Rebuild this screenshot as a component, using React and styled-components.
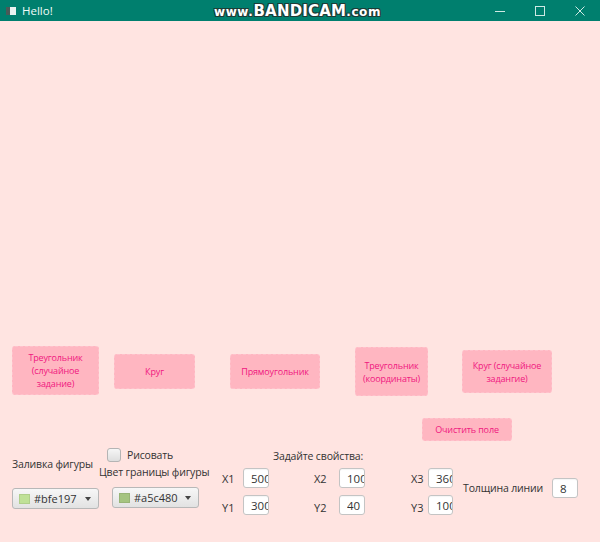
import React from "react";
import styled, { createGlobalStyle } from "styled-components";

const Global = createGlobalStyle`
  html, body { margin: 0; padding: 0; }
  body {
    width: 600px; height: 542px; overflow: hidden;
    background: #ffe4e1;
    font-family: "Open Sans", "Noto Sans", sans-serif;
    color: #333;
  }
  * { box-sizing: border-box; }
`;

const Window = styled.div`
  width: 600px;
  height: 542px;
  display: flex;
  flex-direction: column;
  background: #ffe4e1;
`;

const TitleBar = styled.div`
  height: 21px;
  flex: none;
  background: #007f6e;
  display: flex;
  align-items: center;
  position: relative;
  color: #fff;
`;

const AppIcon = styled.div`
  width: 10px;
  height: 8px;
  margin-left: 6px;
  background: #e8f2f0;
  border-left: 4px solid #4a5a58;
`;

const TitleText = styled.span`
  margin-left: 6px;
  font-size: 11.5px;
  color: #f2fbf9;
`;

const Watermark = styled.div`
  position: absolute;
  left: 214px;
  top: 1px;
  font-family: "DejaVu Sans", sans-serif;
  font-weight: bold;
  color: #fff;
  white-space: nowrap;
  text-shadow: -1px -1px 0 #1d3b36, 1px -1px 0 #1d3b36, -1px 1px 0 #1d3b36, 1px 1px 0 #1d3b36;
`;

const WmSmall = styled.span`
  font-size: 12px;
  letter-spacing: 0.6px;
`;
const WmBig = styled.span`
  font-size: 15px;
  letter-spacing: 0.2px;
`;

const WinButtons = styled.div`
  margin-left: auto;
  display: flex;
  align-items: center;
  height: 100%;
`;

const WinBtn = styled.div`
  width: 40px;
  height: 21px;
  display: flex;
  align-items: center;
  justify-content: center;
`;

const Canvas = styled.div`
  height: 325px;
  flex: none;
`;

const ButtonRow = styled.div`
  display: flex;
  align-items: flex-start;
  height: 50px;
`;

const PinkButton = styled.button`
  margin-top: ${(p) => p.$top}px;
  margin-left: ${(p) => p.$left}px;
  width: ${(p) => p.$w}px;
  height: ${(p) => p.$h}px;
  background: #ffb6c1;
  border: 1px dashed #ffc2cc;
  border-radius: 3px;
  color: #f0177f;
  font-family: "Open Sans", "Noto Sans", sans-serif;
  font-size: 9px;
  letter-spacing: -0.15px;
  line-height: 13px;
  padding: 0 4px;
  text-align: center;
  cursor: pointer;
`;

const ClearRow = styled.div`
  display: flex;
  margin-top: 22px;
`;

const Controls = styled.div`
  display: flex;
  align-items: flex-start;
`;

const Column = styled.div`
  display: flex;
  flex-direction: column;
  align-items: flex-start;
  width: ${(p) => p.$w}px;
  margin-left: ${(p) => p.$left || 0}px;
  padding-top: ${(p) => p.$pt || 0}px;
  flex: none;
`;

const Label = styled.span`
  font-size: 10.5px;
  letter-spacing: -0.15px;
  line-height: 16px;
  color: #333;
  white-space: nowrap;
  margin-left: ${(p) => p.$left || 0}px;
  margin-top: ${(p) => p.$top || 0}px;
`;

const CheckRow = styled.label`
  display: flex;
  align-items: center;
  gap: 6px;
  height: 16px;
  margin-left: 8px;
`;

const CheckBox = styled.span`
  width: 14px;
  height: 14px;
  border: 1px solid #b4b4b4;
  border-radius: 3px;
  background: linear-gradient(#f6f6f6, #dedede);
`;

const Picker = styled.div`
  margin-top: ${(p) => p.$top}px;
  margin-left: ${(p) => p.$left || 0}px;
  width: 87px;
  height: 21px;
  border: 1px solid #b8b8b8;
  border-radius: 3px;
  background: linear-gradient(#f7f7f7, #e2e2e2);
  display: flex;
  align-items: center;
  padding-left: 6px;
`;

const Swatch = styled.span`
  width: 11px;
  height: 10px;
  background: ${(p) => p.$c};
  border: 1px solid rgba(0,0,0,0.08);
`;

const PickerText = styled.span`
  margin-left: 4px;
  font-size: 11px;
  color: #333;
  flex: 1;
`;

const Arrow = styled.span`
  width: 0;
  height: 0;
  border-left: 3.5px solid transparent;
  border-right: 3.5px solid transparent;
  border-top: 4px solid #444;
  margin-right: 7px;
`;

const Props = styled.div`
  padding-top: 7px;
  display: flex;
  flex-direction: column;
  flex: none;
`;

const PropsGrid = styled.div`
  display: grid;
  grid-template-columns: 92px 97px 44px;
  grid-template-rows: 20px 20px;
  row-gap: 7px;
  margin-top: 4px;
`;

const Pair = styled.div`
  display: flex;
  align-items: center;
`;

const PairLabel = styled.span`
  width: ${(p) => p.$w}px;
  flex: none;
  font-size: 11px;
  color: #333;
  padding-left: 1px;
  position: relative;
  top: ${(p) => p.$dy || 0}px;
`;

const Field = styled.input`
  width: ${(p) => p.$w || 26}px;
  height: 20px;
  border: 1px solid #c4c4c4;
  border-radius: 3px;
  background: #fff;
  box-shadow: inset 0 1px 1px rgba(0,0,0,0.04);
  padding: 0 0 0 7px;
  font-family: "Open Sans", "Noto Sans", sans-serif;
  font-size: 11.5px;
  color: #333;
  outline: none;
  flex: none;
`;

const Thickness = styled.div`
  display: flex;
  align-items: center;
  margin-left: 9px;
  padding-top: 37px;
`;

const ThickLabel = styled.span`
  width: 89px;
  font-size: 10.5px;
  letter-spacing: -0.15px;
  color: #333;
`;

export default function App() {
  return (
    <Window>
      <Global />
      <TitleBar>
        <AppIcon />
        <TitleText>Hello!</TitleText>
        <Watermark>
          <WmSmall>www.</WmSmall>
          <WmBig>BANDICAM</WmBig>
          <WmSmall>.com</WmSmall>
        </Watermark>
        <WinButtons>
          <WinBtn>
            <svg width="10" height="10" viewBox="0 0 10 10">
              <line x1="0" y1="5.5" x2="10" y2="5.5" stroke="#cfe9e4" strokeWidth="1" />
            </svg>
          </WinBtn>
          <WinBtn>
            <svg width="10" height="10" viewBox="0 0 10 10">
              <rect x="0.5" y="0.5" width="9" height="9" fill="none" stroke="#cfe9e4" strokeWidth="1" />
            </svg>
          </WinBtn>
          <WinBtn>
            <svg width="10" height="10" viewBox="0 0 10 10">
              <path d="M0.5 0.5 L9.5 9.5 M9.5 0.5 L0.5 9.5" stroke="#cfe9e4" strokeWidth="1" />
            </svg>
          </WinBtn>
        </WinButtons>
      </TitleBar>

      <Canvas />

      <ButtonRow>
        <PinkButton $left={12} $top={0} $w={87} $h={49}>Треугольник (случайное задание)</PinkButton>
        <PinkButton $left={15} $top={8} $w={81} $h={35}>Круг</PinkButton>
        <PinkButton $left={35} $top={8} $w={90} $h={35}>Прямоугольник</PinkButton>
        <PinkButton $left={35} $top={1} $w={73} $h={49}>Треугольник (координаты)</PinkButton>
        <PinkButton $left={34} $top={4} $w={90} $h={43}>Круг (случайное задангие)</PinkButton>
      </ButtonRow>

      <ClearRow>
        <PinkButton $left={422} $top={0} $w={90} $h={23}>Очистить поле</PinkButton>
      </ClearRow>

      <Controls>
        <Column $w={87} $left={12} $pt={15}>
          <Label>Заливка фигуры</Label>
          <Picker $top={16}>
            <Swatch $c="#bfe197" />
            <PickerText>#bfe197</PickerText>
            <Arrow />
          </Picker>
        </Column>
        <Column $w={122} $pt={6}>
          <CheckRow>
            <CheckBox />
            <Label>Рисовать</Label>
          </CheckRow>
          <Label $top={1}>Цвет границы фигуры</Label>
          <Picker $top={7} $left={13}>
            <Swatch $c="#a5c480" />
            <PickerText>#a5c480</PickerText>
            <Arrow />
          </Picker>
        </Column>
        <Props>
          <Label $left={52}>Задайте свойства:</Label>
          <PropsGrid>
            <Pair>
              <PairLabel $w={22}>X1</PairLabel>
              <Field defaultValue="500" />
            </Pair>
            <Pair>
              <PairLabel $w={26}>X2</PairLabel>
              <Field defaultValue="100" />
            </Pair>
            <Pair>
              <PairLabel $w={18}>X3</PairLabel>
              <Field defaultValue="360" $w={25} />
            </Pair>
            <Pair>
              <PairLabel $w={22} $dy={2}>Y1</PairLabel>
              <Field defaultValue="300" />
            </Pair>
            <Pair>
              <PairLabel $w={26} $dy={2}>Y2</PairLabel>
              <Field defaultValue="40" />
            </Pair>
            <Pair>
              <PairLabel $w={18} $dy={2}>Y3</PairLabel>
              <Field defaultValue="100" $w={25} />
            </Pair>
          </PropsGrid>
        </Props>
        <Thickness>
          <ThickLabel>Толщина линии</ThickLabel>
          <Field defaultValue="8" />
        </Thickness>
      </Controls>
    </Window>
  );
}
